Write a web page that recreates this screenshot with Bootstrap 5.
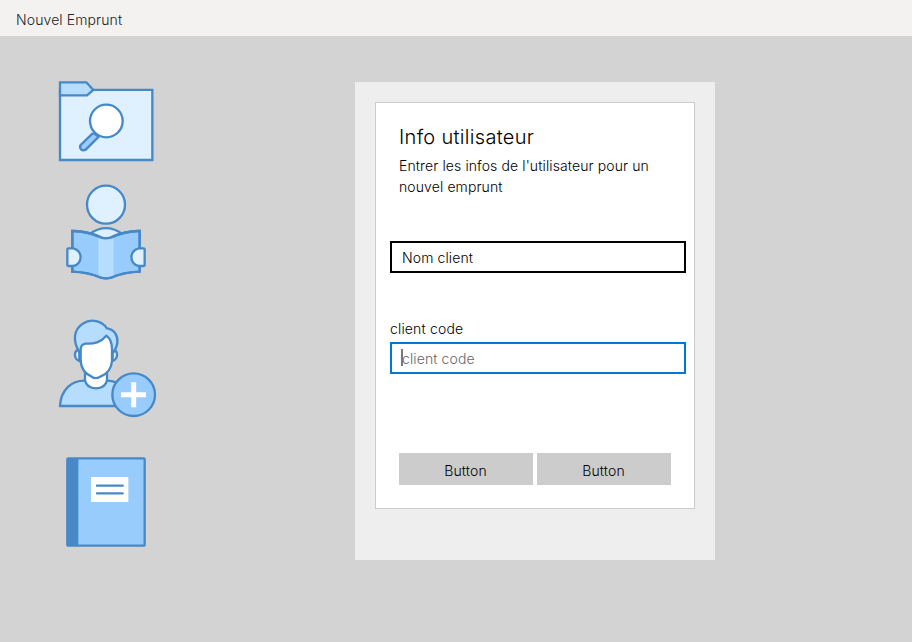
<!DOCTYPE html>
<html lang="fr">
<head>
<meta charset="utf-8">
<meta name="viewport" content="width=device-width, initial-scale=1">
<title>Nouvel Emprunt</title>
<link href="https://cdn.jsdelivr.net/npm/bootstrap@5.3.0/dist/css/bootstrap.min.css" rel="stylesheet">
<style>
body{background:#d3d3d3;font-family:Inter,"Liberation Sans",sans-serif;font-size:14px;line-height:21px;font-weight:300;letter-spacing:.11px;color:#000;overflow:hidden}
.titlebar{height:36px;background:#f3f2f1;color:#222;padding:3px 16px 0}
.icon-rail{width:120px;margin:34px 0 0 46px}
.icon-rail svg{display:block;width:120px;stroke:#4788c7;stroke-width:7;fill:#dff0fe}
.rail-gap{margin-bottom:20px}
.panel{width:360px;height:478px;margin:46px 0 0 189px;padding:20px;background:#eee}
.dialog-box{height:407px;border:1px solid #ccc;border-radius:0;padding:22px 23px 23px}
.dialog-title{font-size:20px;line-height:24px;font-weight:300;letter-spacing:.31px;margin:0 0 6px}
.dialog-fields{margin:0 -15px 0 -9px}
.field{height:32px;border:2px solid #000;border-radius:0;padding:1px 10px 0;font-size:14px;line-height:27px;font-weight:300;letter-spacing:.11px;color:#000}
.field:focus{box-shadow:none}
.field-active,.field-active:focus{border-color:#0078d7}
.field::placeholder{color:#666;opacity:1}
.caret-line{left:11px;top:7px;width:2px;height:17px;background:#777}
.code-label{margin:45px 0 3px;letter-spacing:.16px}
.dialog-actions{margin-top:75px}
.btn-flat{height:32px;border:0;border-radius:0;background:#ccc;color:#000;font-size:14px;line-height:21px;font-weight:300;letter-spacing:.16px;padding:3px 1px 0 0}
</style>
</head>
<body>
<header class="titlebar d-flex align-items-center">Nouvel Emprunt</header>
<main class="d-flex align-items-start">
<nav class="icon-rail">
<svg class="mb-1" height="100" viewBox="-1 -1 360 300">
<path d="M41 58.500H318V269H41Z"/>
<path d="M41 36H120L141 59L122 75H41Z" fill="#b6dcfe"/>
<path d="M145 190L156 200L118 238Q110 242 104 237Q99 230 103 224L138 190Z" fill="#98ccfd"/>
<circle cx="180" cy="152" r="49" fill="#fff"/>
</svg>
<svg class="rail-gap" height="116" viewBox="0 -4 360 348">
<circle cx="180" cy="88" r="57"/>
<path d="M132 175Q180 142 228 175L190 195H170Z"/>
<path d="M79 167Q122 166 166 187Q180 191 194 187Q238 166 281 167V289Q233 291 195 307Q180 311 165 307Q127 291 79 289Z" fill="#98ccfd"/>
<path d="M157 186Q180 195 203 186V301Q180 310 157 301Z" fill="#b6dcfe" stroke="none"/>
<path d="M79 167Q122 166 166 187Q180 191 194 187Q238 166 281 167V289Q233 291 195 307Q180 311 165 307Q127 291 79 289Z" fill="none"/>
<path d="M67 219H82A27 27 0 0 1 82 272H67Q64 272 64 269V222Q64 219 67 219ZM293 219H278A27 27 0 0 0 278 272H293Q296 272 296 269V222Q296 219 293 219Z"/>
</svg>
<svg class="rail-gap" height="115" viewBox="0 -1 360 345">
<path d="M42 287C45 237 78 210 117 211H183C222 212 256 240 259 287Z" fill="#b6dcfe"/>
<path d="M117 185V210Q122 234 150 234Q178 234 183 210V185Z" fill="#fff"/>
<path d="M100 119C83 119 82 145 100 152ZM200 119C217 119 218 145 200 152Z"/>
<path d="M100 125C80 94 82 58 110 40C136 23 168 32 183 54C206 57 216 77 214 98Q212 112 203 125Z" fill="#b6dcfe"/>
<path d="M104 116Q105 102 119 100C146 101 163 97 181 76Q198 87 198 116V152C196 179 181 191 165 198Q150 208 137 199C119 191 105 177 104 151Z" fill="#fff"/>
<circle cx="263" cy="253" r="64" fill="#98ccfd"/>
<path d="M263 216V291M225 253H300" stroke="#fff" stroke-width="15"/>
</svg>
<svg height="115" viewBox="0 0 360 345">
<rect x="64" y="40" width="232" height="262" rx="3" fill="#98ccfd"/>
<path d="M64 40H97V302H64Z" fill="#4788c7" stroke="none"/>
<path d="M135 96H247V171H135Z" fill="#fff" stroke="none"/>
<path d="M153 122H230M153 145H230" stroke-linecap="round"/>
</svg>
</nav>
<section class="panel">
<div class="dialog-box bg-white d-flex flex-column">
<h1 class="dialog-title">Info utilisateur</h1>
<p class="mb-0">Entrer les infos de l'utilisateur pour un nouvel emprunt</p>
<div class="dialog-fields mt-auto">
<input class="form-control field" type="text" value="Nom client" aria-label="Nom client">
<label class="d-block code-label" for="code">client code</label>
<div class="position-relative">
<input class="form-control field field-active" id="code" type="text" placeholder="client code">
<span class="caret-line position-absolute"></span>
</div>
</div>
<div class="row g-1 dialog-actions">
<div class="col"><button class="btn btn-flat w-100" type="button">Button</button></div>
<div class="col"><button class="btn btn-flat w-100" type="button">Button</button></div>
</div>
</div>
</section>
</main>
<script src="https://cdn.jsdelivr.net/npm/bootstrap@5.3.0/dist/js/bootstrap.bundle.min.js"></script>
</body>
</html>
